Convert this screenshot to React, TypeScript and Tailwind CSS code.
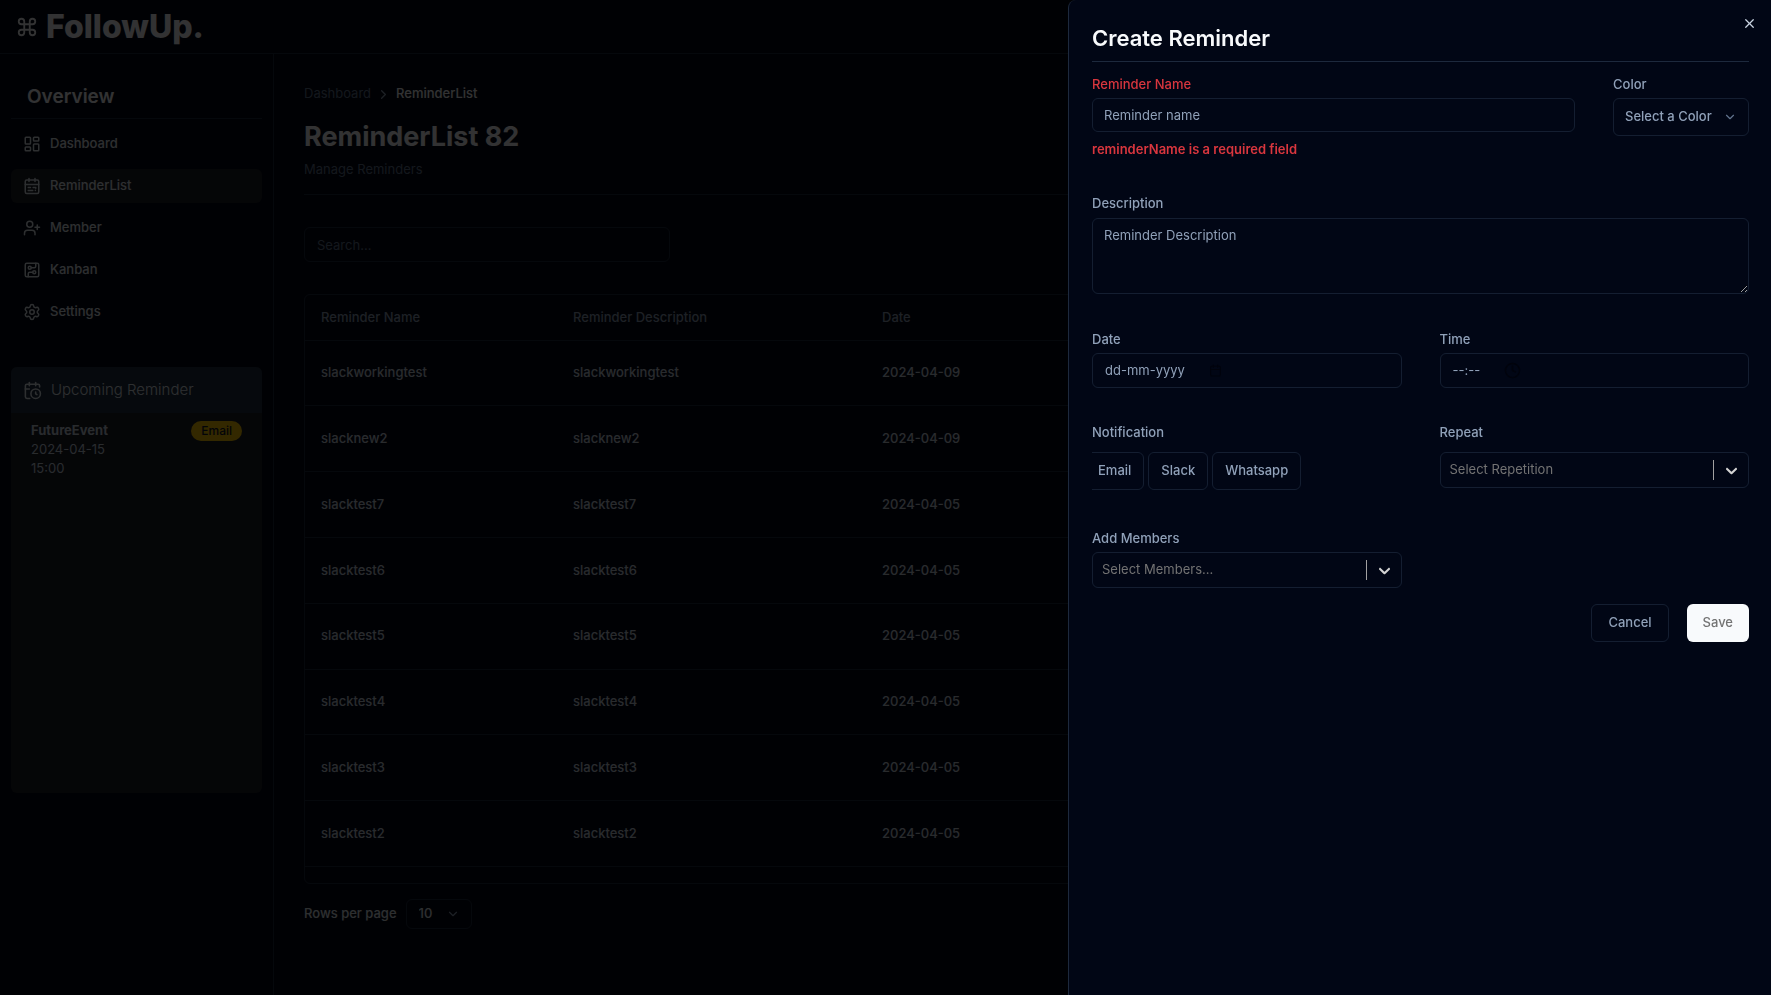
import React from "react";
import {
  CalendarClock,
  ChevronDown,
  ChevronRight,
  Command,
  LayoutDashboard,
  Settings,
  UserPlus,
  X,
  Clock,
  Calendar,
} from "lucide-react";

const ListIcon = () => (
  <svg viewBox="0 0 24 24" className="size-[18px]" fill="none" stroke="currentColor" strokeWidth="2" strokeLinecap="round" strokeLinejoin="round" aria-hidden="true">
    <rect x="3" y="4" width="18" height="18" rx="2" />
    <path d="M16 2v4M8 2v4M3 10h18M7 14h3M13.5 14H17v1M7 18h6M16.5 18v-.5" />
  </svg>
);

const KanbanIcon = () => (
  <svg viewBox="0 0 24 24" className="size-[18px]" fill="none" stroke="currentColor" strokeWidth="2" strokeLinecap="round" strokeLinejoin="round" aria-hidden="true">
    <rect width="18" height="18" x="3" y="3" rx="2" />
    <path d="M11 9h4a2 2 0 0 0 2-2V3" />
    <circle cx="9" cy="9" r="2" />
    <path d="M7 21v-4a2 2 0 0 1 2-2h4" />
    <circle cx="15" cy="15" r="2" />
  </svg>
);

const navItems = [
  { label: "Dashboard", icon: <LayoutDashboard className="size-[18px]" /> },
  { label: "ReminderList", icon: <ListIcon />, active: true },
  { label: "Member", icon: <UserPlus className="size-[18px]" /> },
  { label: "Kanban", icon: <KanbanIcon /> },
  { label: "Settings", icon: <Settings className="size-[18px]" /> },
];

const reminders = [
  ["slackworkingtest", "2024-04-09"],
  ["slacknew2", "2024-04-09"],
  ["slacktest7", "2024-04-05"],
  ["slacktest6", "2024-04-05"],
  ["slacktest5", "2024-04-05"],
  ["slacktest4", "2024-04-05"],
  ["slacktest3", "2024-04-05"],
  ["slacktest2", "2024-04-05"],
];

function Sidebar() {
  return (
    <aside className="w-[274px] shrink-0 border-r border-slate-800 px-[11px] pt-[29px]">
      <h2 className="px-4 text-[19px]/[28px] font-semibold">Overview</h2>
      <div className="mt-[7px] border-t border-slate-800" />
      <nav className="mt-2 flex flex-col gap-2">
        {navItems.map((item) => (
          <a
            key={item.label}
            href="#"
            className={`flex h-[34px] items-center gap-[9px] rounded-md px-3 text-[13px] font-medium text-slate-200 ${item.active ? "bg-[#1c1f27]" : ""}`}
          >
            {item.icon}
            {item.label}
          </a>
        ))}
      </nav>
      <section className="mt-[38px] h-[426px] overflow-hidden rounded-md bg-[#1c1f27]">
        <h3 className="flex h-[46px] items-center gap-[9px] bg-[#1e2f40] px-3 text-[15px] font-light text-slate-200">
          <CalendarClock className="size-[19px]" />
          Upcoming Reminder
        </h3>
        <div className="flex items-start justify-between px-5 pt-2 text-[13px]/[19px] text-slate-300">
          <div>
            <p className="font-bold">FutureEvent</p>
            <p>2024-04-15</p>
            <p>15:00</p>
          </div>
          <span className="rounded-full bg-yellow-400 px-[10px] text-[12px]/[20px] font-medium text-slate-900">Email</span>
        </div>
      </section>
    </aside>
  );
}

function ReminderPage() {
  return (
    <main className="flex min-w-0 grow flex-col px-[30px] pt-[30px]">
      <nav aria-label="Breadcrumb" className="flex h-5 items-center gap-[5px] text-[13px]">
        <a href="#" className="text-slate-500">Dashboard</a>
        <ChevronRight className="size-[15px] text-slate-400" />
        <span className="font-medium">ReminderList</span>
      </nav>
      <h1 className="mt-[15px] text-[27px]/[36px] font-bold">ReminderList 82</h1>
      <p className="mt-1 text-[13px]/[20px] text-slate-500">Manage Reminders</p>
      <div className="mt-[15px] border-t border-slate-800" />
      <input aria-label="Search" placeholder="Search..." className="mt-8 h-[35px] w-[366px] rounded-md border border-slate-800 bg-transparent px-3 text-[13px] placeholder:text-slate-500" />
      <div className="mt-8 h-[590px] overflow-hidden rounded-md border border-slate-800">
        <table className="h-[572px] w-full table-fixed text-left text-[13px]">
          <thead>
            <tr className="h-[45px] border-b border-slate-800 text-slate-400">
              <th className="w-[252px] px-4 font-medium">Reminder Name</th>
              <th className="w-[309px] px-4 font-medium">Reminder Description</th>
              <th className="px-4 font-medium">Date</th>
            </tr>
          </thead>
          <tbody>
            {reminders.map(([name, date]) => (
              <tr key={name} className="border-b border-slate-800 font-medium text-slate-300">
                <td className="px-4">{name}</td>
                <td className="px-4">{name}</td>
                <td className="px-4">{date}</td>
              </tr>
            ))}
          </tbody>
        </table>
      </div>
      <div className="mt-[15px] flex items-center gap-[9px] text-[13px] font-medium text-slate-200">
        <label htmlFor="rows">Rows per page</label>
        <div className="grid items-center">
          <select id="rows" className="col-start-1 row-start-1 h-[30px] w-[66px] appearance-none rounded-md border border-slate-800 bg-transparent px-3">
            <option>10</option>
          </select>
          <ChevronDown className="pointer-events-none col-start-1 row-start-1 mr-3 size-[14px] justify-self-end text-slate-400" />
        </div>
      </div>
    </main>
  );
}

const labelClass = "text-[13px]/[20px] font-medium text-slate-400";

function PickerField({ id, label, placeholder, children }: { id: string; label: string; placeholder: string; children: React.ReactNode }) {
  return (
    <div className="flex flex-col gap-1">
      <label htmlFor={id} className={labelClass}>{label}</label>
      <div className="flex h-[35px] items-center gap-6 rounded-md border border-slate-800/70 px-3">
        <input id={id} placeholder={placeholder} className="field-sizing-content bg-transparent text-[13px] outline-none placeholder:text-slate-400" />
        {children}
      </div>
    </div>
  );
}

function SearchSelect({ id, label, placeholder, labelGap }: { id: string; label: string; placeholder: string; labelGap: string }) {
  return (
    <div className={`flex flex-col ${labelGap}`}>
      <label htmlFor={id} className={labelClass}>{label}</label>
      <div className="grid items-center">
        <select id={id} className="col-start-1 row-start-1 h-9 w-full appearance-none rounded-md border border-slate-800/70 bg-transparent px-[9px] text-[13px] text-neutral-500">
          <option>{placeholder}</option>
        </select>
        <span className="pointer-events-none col-start-1 row-start-1 mr-2 flex items-center gap-2 justify-self-end text-neutral-300">
          <span className="h-5 w-px bg-neutral-400" />
          <svg viewBox="0 0 20 20" className="size-[19px]" fill="currentColor" aria-hidden="true">
            <path d="M4.516 7.548c0.436-0.446 1.043-0.481 1.576 0l3.908 3.747 3.908-3.747c0.533-0.481 1.141-0.446 1.574 0 0.436 0.445 0.408 1.197 0 1.615-0.406 0.418-4.695 4.502-4.695 4.502-0.217 0.223-0.502 0.335-0.787 0.335s-0.57-0.112-0.789-0.335c0 0-4.287-4.084-4.695-4.502s-0.436-1.17 0-1.615z" />
          </svg>
        </span>
      </div>
    </div>
  );
}

function CreateReminderSheet() {
  return (
    <section
      role="dialog"
      aria-modal="true"
      aria-labelledby="sheet-title"
      className="fixed inset-y-0 right-0 w-[703px] max-w-full overflow-y-auto rounded-tl-lg border-l border-slate-800 bg-[#010615] pt-5 pr-[22px] pl-[23px]"
    >
      <button type="button" aria-label="Close" className="absolute top-4 right-[14px] text-slate-300">
        <X className="size-[15px]" />
      </button>
      <h2 id="sheet-title" className="text-[22px]/[36px] font-semibold text-slate-50">Create Reminder</h2>
      <form className="mt-[5px] border-t border-slate-800 pt-3">
        <div className="flex items-start gap-[38px]">
          <div className="flex grow flex-col">
            <label htmlFor="name" className="text-[13px]/[20px] font-medium text-[#d9363e]">Reminder Name</label>
            <input id="name" placeholder="Reminder name" className="mt-1 h-[34px] rounded-md border border-slate-800/70 bg-transparent px-[11px] text-[13px] placeholder:text-slate-400" />
            <p className="mt-[7px] text-[13px]/[20px] font-semibold text-[#d9363e]">reminderName is a required field</p>
          </div>
          <div className="flex w-[136px] flex-col gap-1">
            <label htmlFor="color" className={labelClass}>Color</label>
            <div className="grid items-center">
              <select id="color" className="col-start-1 row-start-1 h-[38px] w-full appearance-none rounded-md border border-slate-800/70 bg-transparent px-[11px] text-[13px] font-medium text-slate-400">
                <option>Select a Color</option>
              </select>
              <ChevronDown className="pointer-events-none col-start-1 row-start-1 mr-3 size-[14px] justify-self-end text-slate-500" />
            </div>
          </div>
        </div>

        <div className="mt-[34px] flex flex-col gap-[5px]">
          <label htmlFor="description" className={labelClass}>Description</label>
          <textarea id="description" placeholder="Reminder Description" className="h-[76px] rounded-md border border-slate-800/70 bg-transparent px-[11px] py-[6px] text-[13px]/[20px] [color-scheme:dark] placeholder:text-slate-400" />
        </div>

        <div className="mt-[35px] grid grid-cols-2 gap-x-[38px]">
          <PickerField id="date" label="Date" placeholder="dd-mm-yyyy">
            <Calendar className="size-[13px] text-[#01030c]" />
          </PickerField>
          <PickerField id="time" label="Time" placeholder="--:--">
            <Clock className="size-[17px] text-[#01030c]" />
          </PickerField>
        </div>

        <div className="mt-[34px] grid grid-cols-2 gap-x-[38px]">
          <div className="flex flex-col gap-[10px]">
            <span className={labelClass}>Notification</span>
            <div className="flex gap-1 overflow-hidden">
              {["Email", "Slack", "Whatsapp"].map((channel) => (
                <button key={channel} type="button" className="h-[38px] rounded-md border border-slate-800/70 px-3 text-[13px] font-medium text-slate-400 first:-ml-[7px]">
                  {channel}
                </button>
              ))}
            </div>
          </div>
          <SearchSelect id="repeat" label="Repeat" placeholder="Select Repetition" labelGap="gap-[10px]" />
        </div>

        <div className="mt-[38px] grid grid-cols-2 gap-x-[38px]">
          <SearchSelect id="members" label="Add Members" placeholder="Select Members..." labelGap="gap-1" />
        </div>

        <div className="mt-4 flex justify-end gap-[18px] text-[13px] font-medium">
          <button type="button" className="h-[38px] rounded-md border border-slate-800/70 px-4 text-slate-400">Cancel</button>
          <button type="submit" className="h-[38px] rounded-md bg-slate-50 px-4 text-neutral-500">Save</button>
        </div>
      </form>
    </section>
  );
}

export default function App() {
  return (
    <div className="flex min-h-screen flex-col bg-[#020817] font-[Inter,sans-serif] text-slate-50">
      <header className="flex h-[54px] items-center gap-2 border-b border-slate-800 px-4">
        <Command className="size-[22px]" />
        <span className="text-[32px] font-extrabold">FollowUp.</span>
      </header>
      <div className="flex grow">
        <Sidebar />
        <ReminderPage />
      </div>
      <div className="fixed inset-0 bg-black/80" />
      <CreateReminderSheet />
    </div>
  );
}
